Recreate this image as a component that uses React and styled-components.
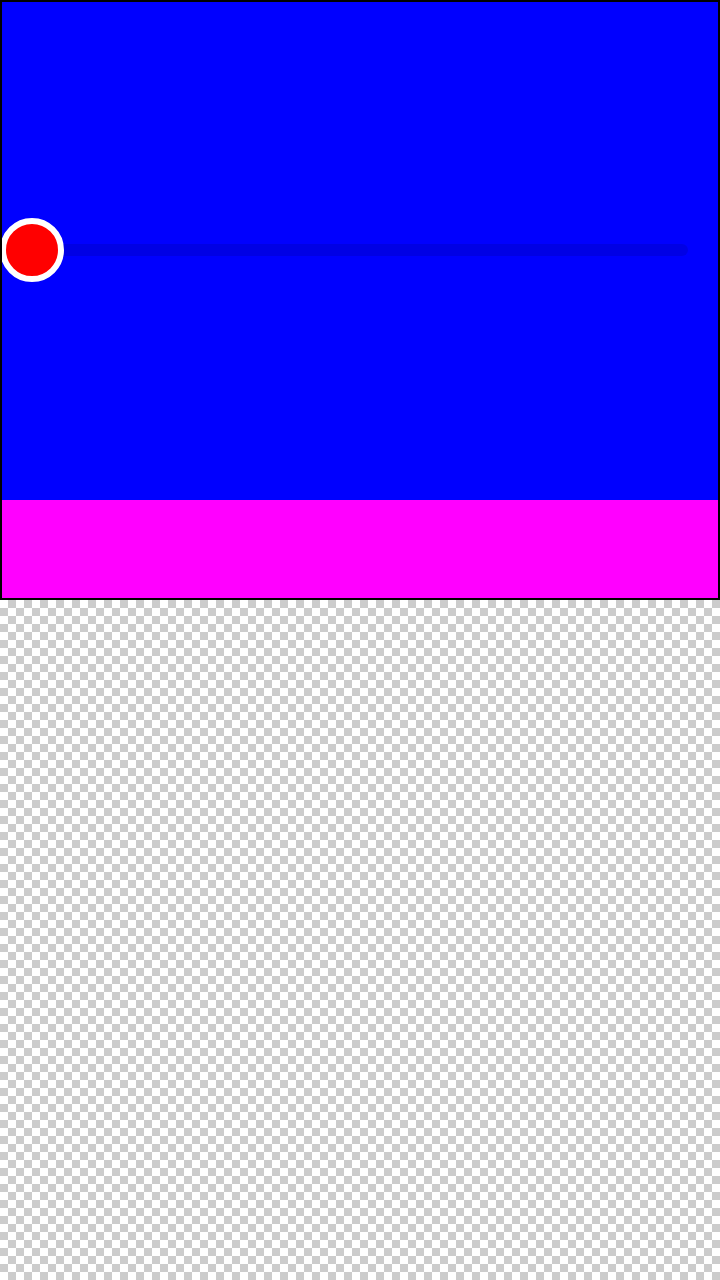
import React from "react";
import styled, { createGlobalStyle } from "styled-components";

const Global = createGlobalStyle`
  html, body {
    margin: 0;
    padding: 0;
  }
  body {
    min-height: 1280px;
    font-family: "Liberation Sans", Arial, sans-serif;
    background-color: #ffffff;
    background-image: conic-gradient(
      #cccccc 0 25%,
      #ffffff 0 50%,
      #cccccc 0 75%,
      #ffffff 0
    );
    background-size: 16px 16px;
    background-position: 0 8px;
  }
`;

const Frame = styled.div`
  box-sizing: border-box;
  width: 720px;
  height: 600px;
  border: 2px solid #000000;
  display: flex;
  flex-direction: column;
  overflow: hidden;
`;

const Stage = styled.div`
  flex: 1;
  background: #0000ff;
  display: flex;
  flex-direction: column;
  justify-content: center;
  padding: 0 30px 2px 30px;
`;

const SliderRow = styled.div`
  position: relative;
  height: 12px;
`;

const Track = styled.div`
  height: 12px;
  border-radius: 6px;
  background: rgba(0, 0, 0, 0.1);
`;

const Thumb = styled.div`
  position: absolute;
  top: 50%;
  left: ${(p) => p.$pos}%;
  width: 64px;
  height: 64px;
  box-sizing: border-box;
  border-radius: 50%;
  border: 6px solid #ffffff;
  background: #ff0000;
  transform: translate(-50%, -50%);
`;

const Footer = styled.div`
  height: 98px;
  flex: none;
  background: #ff00ff;
`;

export default function App() {
  return (
    <>
      <Global />
      <Frame>
        <Stage>
          <SliderRow>
            <Track />
            <Thumb $pos={0} />
          </SliderRow>
        </Stage>
        <Footer />
      </Frame>
    </>
  );
}
